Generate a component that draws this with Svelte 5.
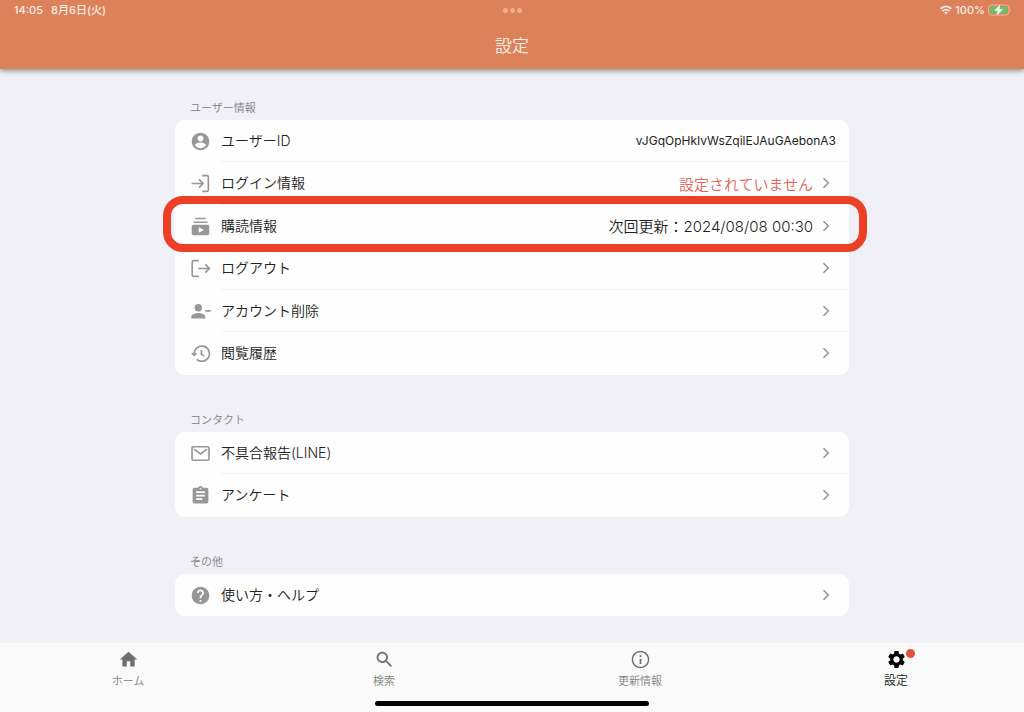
<script>
  const icons = {
    account: 'M12 2C6.48 2 2 6.48 2 12s4.48 10 10 10 10-4.48 10-10S17.52 2 12 2zm0 3.2c1.9 0 3.4 1.5 3.4 3.4S13.900 12 12 12s-3.400-1.500-3.400-3.400S10.100 5.200 12 5.200zm0 14.400c-2.600 0-4.900-1.300-6.200-3.300.1-2 4.100-3.100 6.200-3.100s6.100 1.100 6.200 3.100c-1.300 2-3.600 3.300-6.200 3.300z',
    subscription: 'M20 8H4V6.200h16V8zm-2-4.200H6V2h12V3.800zM22 12v8c0 1.100-.9 2-2 2H4c-1.100 0-2-.9-2-2v-8c0-1.100.9-2 2-2h16c1.100 0 2 .9 2 2zm-6 4l-6-3.270v6.530L16 16z',
    clipboard: 'M19 3h-4.180C14.400 1.840 13.300 1 12 1s-2.400.84-2.820 2H5c-1.100 0-2 .9-2 2v14c0 1.100.9 2 2 2h14c1.100 0 2-.9 2-2V5c0-1.100-.9-2-2-2zm-7 0c.55 0 1 .45 1 1s-.45 1-1 1-1-.45-1-1 .45-1 1-1zm2 14H7v-2h7v2zm3-4H7v-2h10v2zm0-4H7V7h10v2z',
    help: 'M12 2C6.48 2 2 6.48 2 12s4.48 10 10 10 10-4.48 10-10S17.52 2 12 2zm1 17h-2v-2h2v2zm2.070-7.750l-.9.920C13.450 12.900 13 13.500 13 15h-2v-.5c0-1.100.45-2.100 1.170-2.830l1.240-1.260c.37-.36.59-.86.59-1.410 0-1.100-.9-2-2-2s-2 .9-2 2H8c0-2.210 1.790-4 4-4s4 1.790 4 4c0 .88-.36 1.680-.93 2.250z',
    home: 'M10 20v-6h4v6h5v-8h3L12 3 2 12h3v8z',
    search: 'M15.500 14h-.79l-.28-.27C15.410 12.590 16 11.110 16 9.500 16 5.910 13.090 3 9.500 3S3 5.910 3 9.500 5.910 16 9.500 16c1.610 0 3.090-.59 4.230-1.570l.27.28v.79l5 4.990L20.490 19l-4.990-5zm-6 0C7.010 14 5 11.990 5 9.500S7.010 5 9.500 5 14 7.010 14 9.500 11.990 14 9.500 14z',
    info: 'M11 7h2v2h-2zm0 4h2v6h-2zm1-9C6.480 2 2 6.480 2 12s4.480 10 10 10 10-4.480 10-10S17.520 2 12 2zm0 18.400c-4.600 0-8.400-3.800-8.400-8.400S7.400 3.600 12 3.600s8.400 3.800 8.400 8.400-3.800 8.400-8.400 8.400z',
    settings: 'M19.140 12.940c.04-.3.06-.61.06-.94 0-.32-.02-.64-.07-.94l2.030-1.580c.18-.14.23-.41.12-.61l-1.920-3.320c-.12-.22-.37-.29-.59-.22l-2.390.96c-.5-.38-1.030-.7-1.620-.94l-.36-2.540c-.04-.24-.24-.41-.48-.41h-3.840c-.24 0-.43.17-.47.41l-.36 2.540c-.59.24-1.130.57-1.620.94l-2.390-.96c-.22-.08-.47 0-.59.22L2.740 8.870c-.12.21-.08.47.12.61l2.030 1.580c-.05.3-.09.63-.09.94s.02.64.07.94l-2.030 1.580c-.18.14-.23.41-.12.61l1.920 3.320c.12.22.37.29.59.22l2.390-.96c.5.38 1.030.7 1.620.94l.36 2.540c.05.24.24.41.48.41h3.840c.24 0 .44-.17.47-.41l.36-2.540c.59-.24 1.130-.56 1.620-.94l2.390.96c.22.08.47 0 .59-.22l1.920-3.320c.12-.22.07-.47-.12-.61l-2.010-1.580zM12 15.600c-1.980 0-3.600-1.620-3.600-3.600s1.620-3.600 3.600-3.600 3.600 1.620 3.600 3.600-1.620 3.600-3.600 3.600z'
  };

  const strokes = {
    login: 'M1.800 12H14.500M10.300 7.300L15 12l-4.700 4.700M14 3H19.200Q21 3 21 4.800V19.200Q21 21 19.200 21H14',
    logout: 'M10 3H4.300Q2.500 3 2.500 4.800V19.200Q2.500 21 4.300 21H10M9.500 12H22M17.500 7.300L22.200 12l-4.700 4.700',
    history: 'M4.800 13A8.700 8.700 0 1 1 7.600 18.600M2 11.500L4.700 14.200L7.400 11.500M13 8V12.700L16.300 15',
    mail: 'M3.800 4.300H20.200Q21.700 4.300 21.700 5.800V18.200Q21.700 19.700 20.200 19.700H3.800Q2.300 19.700 2.300 18.200V5.800Q2.300 4.300 3.800 4.300ZM4.500 7L12 12.500L19.500 7'
  };

  const sections = [
    {
      title: 'ユーザー情報',
      rows: [
        { icon: 'account', label: 'ユーザーID', value: 'vJGqOpHkIvWsZqilEJAuGAebonA3', fixed: true },
        { icon: 'login', label: 'ログイン情報', value: '設定されていません', warn: true },
        { icon: 'subscription', label: '購読情報', value: '次回更新：2024/08/08 00:30', marked: true },
        { icon: 'logout', label: 'ログアウト' },
        { icon: 'remove', label: 'アカウント削除' },
        { icon: 'history', label: '閲覧履歴' }
      ]
    },
    {
      title: 'コンタクト',
      rows: [
        { icon: 'mail', label: '不具合報告(LINE)' },
        { icon: 'clipboard', label: 'アンケート' }
      ]
    },
    { title: 'その他', rows: [{ icon: 'help', label: '使い方・ヘルプ' }] }
  ];

  const tabs = [
    { icon: 'home', label: 'ホーム' },
    { icon: 'search', label: '検索' },
    { icon: 'info', label: '更新情報' },
    { icon: 'settings', label: '設定', active: true }
  ];
</script>

{#snippet glyph(name)}
  <svg class="icon" viewBox="0 0 24 24" aria-hidden="true">
    {#if strokes[name]}
      <path d={strokes[name]} fill="none" stroke="currentColor" stroke-width="1.900" />
    {:else if name === 'remove'}
      <circle cx="9.500" cy="7.700" r="4.200" fill="currentColor" />
      <path d="M1.500 20v-2.200c0-2.900 5.300-4.200 8-4.200s8 1.300 8 4.200V20zM17.500 10.300H23.500V12.200H17.500z" fill="currentColor" />
    {:else}
      <path d={icons[name]} fill="currentColor" />
    {/if}
  </svg>
{/snippet}

{#snippet content(row)}
  {@render glyph(row.icon)}
  <span class="body">
    <span class="label">{row.label}</span>
    {#if row.value}
      <span class="value" class:warn={row.warn} class:code={row.fixed}>{row.value}</span>
    {/if}
    {#if !row.fixed}
      <svg class="chevron" viewBox="0 0 8 12" aria-hidden="true">
        <path d="M1.500 1.200L6.300 6L1.500 10.800" fill="none" stroke="currentColor" stroke-width="1.400" />
      </svg>
    {/if}
  </span>
{/snippet}

<div class="page">
  <header>
    <div class="status">
      <span>14:05</span>
      <span class="date">8月6日(火)</span>
      <span class="power">
        <svg class="wifi" viewBox="0 0 12 10" aria-hidden="true">
          <path d="M.6 3.700Q6-1 11.400 3.700M2.500 6.100Q6 3.200 9.500 6.100" fill="none" stroke="currentColor" stroke-width="1.800" />
          <path d="M4.100 7.500Q6 6.200 7.900 7.500L6 9.600z" fill="currentColor" />
        </svg>
        <span>100%</span>
        <svg class="battery" viewBox="0 0 24 12" aria-hidden="true">
          <rect x=".5" y="1" width="20.500" height="10" rx="3" fill="none" stroke="#efb598" />
          <rect x="2" y="2.500" width="17.500" height="7" rx="1.500" fill="#62c466" />
          <path d="M22.300 4.300Q23.800 6 22.300 7.700z" fill="#efb598" />
          <path d="M12.300 .5L6.300 6.700H9.700L8.700 11.500L14.900 5.300H11.300z" fill="#fff" />
        </svg>
      </span>
      <span class="dots"><i></i><i></i><i></i></span>
    </div>
    <h1>設定</h1>
  </header>

  <main>
    {#each sections as section}
      <section>
        <h2>{section.title}</h2>
        <ul>
          {#each section.rows as row}
            <li class:marked={row.marked}>
              {#if row.fixed}
                <div class="row">{@render content(row)}</div>
              {:else}
                <button class="row" type="button">{@render content(row)}</button>
              {/if}
            </li>
          {/each}
        </ul>
      </section>
    {/each}
  </main>

  <nav>
    {#each tabs as tab}
      <button class="tab" class:active={tab.active} type="button" aria-current={tab.active ? 'page' : undefined}>
        <span class="tab-icon">{@render glyph(tab.icon)}</span>
        <span>{tab.label}</span>
      </button>
    {/each}
    <div class="indicator"></div>
  </nav>
</div>

<style>
  :global(body) {
    margin: 0;
    background: #f1f0f6;
  }
  .page {
    min-height: 100vh;
    display: flex;
    flex-direction: column;
    font-family: Inter, "Noto Sans CJK JP", sans-serif;
    font-weight: 350;
    color: #222;
  }
  button {
    font: inherit;
    color: inherit;
    background: none;
    border: 0;
    margin: 0;
    padding: 0;
  }
  header {
    background: #dd815a;
    color: #fdeee6;
    box-shadow: 0 2px 5px rgba(0, 0, 0, 0.4);
    padding-bottom: 11px;
  }
  .status {
    position: relative;
    display: flex;
    align-items: center;
    gap: 8px;
    padding: 0 12px 0 14px;
    font-size: 11px;
    font-weight: 500;
    line-height: 20px;
  }
  .power {
    display: flex;
    align-items: center;
    gap: 3px;
    margin-left: auto;
  }
  .wifi {
    width: 12px;
    height: 10px;
  }
  .battery {
    width: 24px;
    height: 12px;
  }
  .dots {
    position: absolute;
    inset: 0;
    display: flex;
    align-items: center;
    justify-content: center;
    gap: 2px;
  }
  .dots i {
    width: 5px;
    height: 5px;
    border-radius: 50%;
    background: #f4b08f;
  }
  h1 {
    margin: 0;
    padding-top: 14px;
    font-size: 17px;
    font-weight: 350;
    line-height: 24px;
    text-align: center;
  }
  main {
    flex: 1;
    width: 100%;
    max-width: 674px;
    margin: 0 auto;
    padding: 31px 0 27px;
    display: flex;
    flex-direction: column;
    gap: 37px;
  }
  h2 {
    margin: 0 0 4px;
    padding-left: 15px;
    font-size: 11px;
    font-weight: 350;
    line-height: 16px;
    color: #808084;
  }
  ul {
    list-style: none;
    margin: 0;
    padding: 0;
    background: #fefefe;
    border-radius: 10px;
  }
  li {
    position: relative;
    display: flex;
    min-height: 42px;
  }
  li:nth-child(even) {
    min-height: 43px;
  }
  .row {
    flex: 1;
    display: flex;
    align-items: center;
    gap: 10px;
    padding-left: 15px;
    text-align: left;
  }
  .row .icon {
    color: #979797;
  }
  .icon {
    display: block;
    flex: none;
    width: 21px;
    height: 21px;
  }
  .body {
    flex: 1;
    align-self: stretch;
    display: flex;
    align-items: center;
    padding-right: 19px;
    font-size: 14px;
    border-bottom: 1px solid #f3f3f5;
  }
  li:last-child .body {
    border-bottom-color: transparent;
  }
  .label {
    flex: 1;
    padding-bottom: 2px;
  }
  .value {
    font-size: 15px;
  }
  .value.warn {
    color: #e5645a;
  }
  .value.code {
    margin-right: -6px;
    font-size: 12px;
    font-weight: 400;
  }
  .chevron {
    width: 8px;
    height: 12px;
    margin-left: 9px;
    color: #8f8f8f;
  }
  .marked::after {
    content: "";
    position: absolute;
    z-index: 1;
    inset: -9px -18px -5px -12px;
    border: 8px solid #eb4025;
    border-radius: 20px;
    pointer-events: none;
  }
  nav {
    position: sticky;
    bottom: 0;
    z-index: 2;
    display: flex;
    background: #fafafa;
    padding: 6px 0 23px;
  }
  .tab {
    flex: 1;
    display: flex;
    flex-direction: column;
    align-items: center;
    gap: 3px;
    font-size: 11px;
    line-height: 16px;
    color: #808080;
  }
  .tab .icon {
    color: #6f6f6f;
  }
  .tab.active {
    font-size: 12px;
    color: #222;
  }
  .tab.active .icon {
    color: #000;
  }
  .tab-icon {
    position: relative;
  }
  .active .tab-icon::after {
    content: "";
    position: absolute;
    top: 0;
    right: -8px;
    width: 9px;
    height: 9px;
    border-radius: 50%;
    background: #e2503f;
  }
  .indicator {
    position: absolute;
    left: 50%;
    bottom: 6px;
    width: 274px;
    height: 5px;
    margin-left: -137px;
    border-radius: 3px;
    background: #000;
  }
</style>
